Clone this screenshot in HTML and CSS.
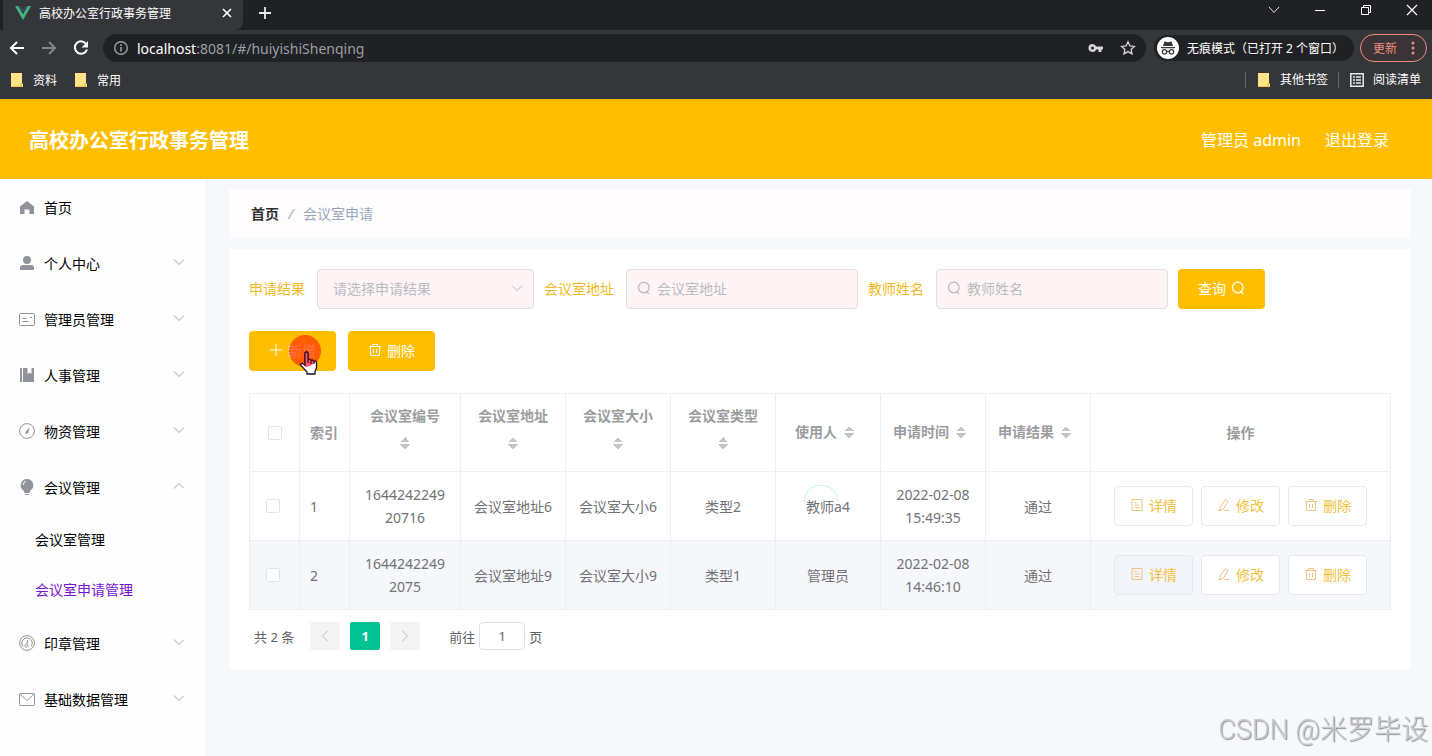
FILE: index.html
```html
<!DOCTYPE html>
<html lang="zh-CN">
<head>
  <meta charset="UTF-8" />
  <title>高校办公室行政事务管理</title>
  <link rel="stylesheet" href="styles.css">
</head>
<body>

<!-- icon set -->
<svg class="sprite" aria-hidden="true">
  <symbol id="i-down" viewBox="0 0 12 12"><path d="M1 3.5l5 5 5-5" fill="none" stroke="currentColor"/></symbol>
  <symbol id="i-search" viewBox="0 0 14 14"><circle cx="6.8" cy="6.5" r="5.3" fill="none" stroke="currentColor" stroke-width="1.200"/><path d="M9.500 10.800l2.700 2" fill="none" stroke="currentColor" stroke-width="1.200"/></symbol>
  <symbol id="i-trash" viewBox="0 0 14 14"><path d="M1 3.5h12M4.500 3.500v-2h5v2M2.500 3.500v9h9v-9M5.500 6v4M8.500 6v4" fill="none" stroke="currentColor"/></symbol>
  <symbol id="i-doc" viewBox="0 0 14 14"><path d="M2 1.500h10v11H2zM4.500 4.500h2M4.500 7h5M4.500 9.500h5" fill="none" stroke="currentColor"/></symbol>
  <symbol id="i-edit" viewBox="0 0 14 14"><path d="M8.500 1.500l2.500 2-4.500 7.500-3.500 1.500.5-4zM1 12.500h3M7.500 12.500H12" fill="none" stroke="currentColor"/></symbol>
  <symbol id="i-folder" viewBox="0 0 14 16"><path d="M1 1h11v10l1 1v3H1z" fill="#ffe487"/><path d="M1 14h9v1H1zM10 11h2v4h-2z" fill="#f5c94c"/></symbol>
</svg>

<div class="browser">
  <div class="tabs">
    <div class="tab">
      <svg width="16" height="14" viewBox="0 0 16 14"><path d="M0 0h3.300L8 8.200 12.700 0H16L8 14z" fill="#41b883"/><path d="M3.300 0H6l2 3.400L10 0h2.700L8 8.200z" fill="#35495e"/></svg>
      <span class="tab-title">高校办公室行政事务管理</span>
      <button class="bare" aria-label="关闭标签页"><svg width="10" height="10" viewBox="0 0 10 10"><path d="M1 1l8 8M9 1L1 9" stroke="#fff" stroke-width="1.600"/></svg></button>
    </div>
    <button class="bare new-tab" aria-label="新标签页"><svg width="14" height="14" viewBox="0 0 14 14"><path d="M7 1v12M1 7h12" stroke="#e8eaed" stroke-width="1.800"/></svg></button>
    <div class="win-buttons">
      <button class="bare" aria-label="搜索标签页"><svg width="12" height="12" viewBox="0 0 12 12"><path d="M1 3l5 5.500L11 3" fill="none" stroke="#e8eaed"/></svg></button>
      <button class="bare" aria-label="最小化"><svg width="12" height="12" viewBox="0 0 12 12"><path d="M1 6.500h10" stroke="#fff"/></svg></button>
      <button class="bare" aria-label="还原"><svg width="12" height="12" viewBox="0 0 12 12"><path d="M1.500 3.500h7v7h-7zM3.500 3.500v-2h7v7h-2" fill="none" stroke="#fff"/></svg></button>
      <button class="bare" aria-label="关闭"><svg width="12" height="12" viewBox="0 0 12 12"><path d="M1 1l10 10M11 1L1 11" stroke="#fff" stroke-width="1.200"/></svg></button>
    </div>
  </div>

  <div class="toolbar">
    <button class="bare" aria-label="后退"><svg width="16" height="16" viewBox="0 0 16 16"><path d="M15 8H2M8 2L2 8l6 6" fill="none" stroke="#fff" stroke-width="2"/></svg></button>
    <button class="bare" aria-label="前进"><svg width="16" height="16" viewBox="0 0 16 16"><path d="M1 8h13M8 2l6 6-6 6" fill="none" stroke="#85868a" stroke-width="2"/></svg></button>
    <button class="bare" aria-label="刷新"><svg width="16" height="16" viewBox="0 0 16 16"><path d="M13.500 4.500A6.200 6.200 0 1 0 14 9.500" fill="none" stroke="#fff" stroke-width="2"/><path d="M15 1v6.500H8.500z" fill="#fff"/></svg></button>
    <div class="address">
      <svg width="16" height="16" viewBox="0 0 16 16"><circle cx="8" cy="8" r="6.300" fill="none" stroke="#9aa0a6" stroke-width="1.400"/><path d="M8 7v4.500M8 4.200V6" stroke="#9aa0a6" stroke-width="1.600"/></svg>
      <span class="url"><b>localhost</b>:8081/#/huiyishiShenqing</span>
      <svg width="16" height="16" viewBox="0 0 16 16"><path fill="#d5d6d8" fill-rule="evenodd" d="M4.500 4a4 4 0 0 1 3.700 2.500H15v3h-1.500V12h-3V9.500H8.200A4 4 0 1 1 4.500 4zm0 2.500a1.500 1.500 0 1 0 0 3 1.500 1.500 0 0 0 0-3z"/></svg>
      <svg width="16" height="16" viewBox="0 0 16 16"><path d="M8 1.800l1.900 4.100 4.500.5-3.300 3 .9 4.500L8 11.600l-4 2.300.9-4.500-3.300-3 4.500-.5z" fill="none" stroke="#d5d6d8" stroke-width="1.300"/></svg>
    </div>
    <div class="incognito">
      <svg width="22" height="22" viewBox="0 0 22 22"><circle cx="11" cy="11" r="11" fill="#fff"/><path d="M7.500 4.500l3.500.8 3.500-.8 1.500 4.500H6zM4 10h14v1.200H4z" fill="#35363a"/><g fill="none" stroke="#35363a" stroke-width="1.200"><circle cx="7.500" cy="14.800" r="2.200"/><circle cx="14.500" cy="14.800" r="2.200"/><path d="M9.700 14.500h2.600"/></g></svg>
      <span>无痕模式（已打开 2 个窗口）</span>
    </div>
    <button class="update">更新 <svg width="4" height="14" viewBox="0 0 4 14" fill="#f28b82"><circle cx="2" cy="2" r="1.500"/><circle cx="2" cy="7" r="1.500"/><circle cx="2" cy="12" r="1.500"/></svg></button>
  </div>

  <div class="bookmarks">
    <a href="#"><svg width="14" height="16"><use href="#i-folder"/></svg>资料</a>
    <a href="#"><svg width="14" height="16"><use href="#i-folder"/></svg>常用</a>
    <a href="#" class="right"><svg width="14" height="16"><use href="#i-folder"/></svg>其他书签</a>
    <a href="#" class="reading"><svg width="14" height="14" viewBox="0 0 14 14"><path d="M.8.8h12.400v12.400H.8zM3 4h2M6 4h5M3 7h2M6 7h5M3 10h2M6 10h5" fill="none" stroke="#e8eaed" stroke-width="1.500"/></svg>阅读清单</a>
  </div>
</div>

<header class="header">
  <h1>高校办公室行政事务管理</h1>
  <span>管理员 admin</span>
  <a href="#">退出登录</a>
</header>

<div class="layout">
  <nav class="sidebar">
    <a href="#" class="item">
      <svg width="16" height="16" viewBox="0 0 16 16"><path d="M8 2l7 5.500V15h-4.500v-4.500h-5V15H1V7.500z" fill="#909399"/></svg><span>首页</span>
    </a>
    <a href="#" class="item">
      <svg width="16" height="16" viewBox="0 0 16 16" fill="#909399"><circle cx="8" cy="5" r="4"/><path d="M1 15v-2q0-3 3-3h8q3 0 3 3v2z"/></svg><span>个人中心</span>
      <svg class="arrow" width="12" height="12"><use href="#i-down"/></svg>
    </a>
    <a href="#" class="item">
      <svg width="16" height="16" viewBox="0 0 16 16" fill="none" stroke="#909399"><rect x=".5" y="2.500" width="15" height="12" rx="1"/><path d="M3.500 7.500h4M3.500 10.500h6M11 6.500h2"/></svg><span>管理员管理</span>
      <svg class="arrow" width="12" height="12"><use href="#i-down"/></svg>
    </a>
    <a href="#" class="item">
      <svg width="16" height="16" viewBox="0 0 16 16" fill="#909399"><path d="M1 1h2v14H1zM4 1h4.500v6L10.500 5.500 12.500 7V1H15v14H4z"/></svg><span>人事管理</span>
      <svg class="arrow" width="12" height="12"><use href="#i-down"/></svg>
    </a>
    <a href="#" class="item">
      <svg width="16" height="16" viewBox="0 0 16 16"><circle cx="8" cy="8" r="7.400" fill="none" stroke="#909399"/><path d="M11 4L9.300 9.500 7 11.500 6.500 9z" fill="#909399"/></svg><span>物资管理</span>
      <svg class="arrow" width="12" height="12"><use href="#i-down"/></svg>
    </a>
    <a href="#" class="item">
      <svg width="16" height="16" viewBox="0 0 16 16"><path d="M8 0a6.300 6.300 0 0 1 3.500 11.500L10.500 14h-5l-1-2.500A6.300 6.300 0 0 1 8 0zM6 15h4v1H6z" fill="#909399"/><path d="M4 6q.3-3 3-3.700" fill="none" stroke="#fff"/></svg><span>会议管理</span>
      <svg class="arrow up" width="12" height="12"><use href="#i-down"/></svg>
    </a>
    <a href="#" class="subitem">会议室管理</a>
    <a href="#" class="subitem active">会议室申请管理</a>
    <a href="#" class="item">
      <svg width="16" height="16" viewBox="0 0 16 16" fill="none" stroke="#909399"><circle cx="8" cy="8" r="7.400"/><path d="M4 11.500a5.200 5.200 0 1 1 8 0M8.500 5L8 9"/><circle cx="7.500" cy="10.800" r="1.500"/></svg><span>印章管理</span>
      <svg class="arrow" width="12" height="12"><use href="#i-down"/></svg>
    </a>
    <a href="#" class="item">
      <svg width="16" height="16" viewBox="0 0 16 16" fill="none" stroke="#909399"><rect x=".5" y="2.500" width="15" height="12" rx="1"/><path d="M1 3l7 6.500L15 3"/></svg><span>基础数据管理</span>
      <svg class="arrow" width="12" height="12"><use href="#i-down"/></svg>
    </a>
  </nav>

  <main class="main">
    <div class="breadcrumb"><a href="#">首页</a><i>/</i><span>会议室申请</span></div>

    <section class="card">
      <form class="filters">
        <label for="result">申请结果</label>
        <div class="field select">
          <select id="result"><option>请选择申请结果</option></select>
          <svg width="12" height="12"><use href="#i-down"/></svg>
        </div>
        <label for="address">会议室地址</label>
        <div class="field">
          <svg width="14" height="14"><use href="#i-search"/></svg>
          <input id="address" type="text" placeholder="会议室地址">
        </div>
        <label for="teacher">教师姓名</label>
        <div class="field">
          <svg width="14" height="14"><use href="#i-search"/></svg>
          <input id="teacher" type="text" placeholder="教师姓名">
        </div>
        <button type="button" class="btn">查询 <svg width="14" height="14"><use href="#i-search"/></svg></button>
      </form>

      <div class="actions">
        <button class="btn add"><svg width="14" height="14" viewBox="0 0 14 14"><path d="M7 1v12M1 7h12" stroke="#fff"/></svg>新增
          <svg class="pointer" width="34" height="42" viewBox="0 0 34 42">
            <circle cx="16" cy="16" r="16" fill="#ff3000" fill-opacity=".7"/>
            <path id="hand" d="M16 30V18q1.500-2 3 0v7q2-1.500 3 .5 2-1 3 1 2.500-1 2.500 1.500v5l-1.500 3.500v2.500h-8V37l-6-6.500q-1-2.500 1.500-2z" fill="#fff" stroke="#1d1426" stroke-width="1.300"/>
            <path d="M16 30V18q1.500-2 3 0v7q2-1.500 3 .5 2-1 3 1l1 .5q-4 5-10 5z" fill="#ff5a6e"/>
            <path d="M16 31V18q1.500-2 3 0v10M19 25q2-1.500 3 .5V29M22 25.500q2-1 3 1V29" fill="none" stroke="#4b1020" stroke-width="1.300"/>
          </svg>
        </button>
        <button class="btn"><svg width="14" height="14"><use href="#i-trash"/></svg>删除</button>
      </div>

      <table class="table">
        <colgroup>
          <col class="c-small"><col class="c-small"><col class="c-code">
          <col class="c-mid"><col class="c-mid"><col class="c-mid"><col class="c-mid"><col class="c-mid"><col class="c-mid">
          <col>
        </colgroup>
        <thead>
          <tr>
            <th><input type="checkbox" aria-label="全选"></th>
            <th class="left">索引</th>
            <th>会议室编号 <span class="sort"></span></th>
            <th>会议室地址 <span class="sort"></span></th>
            <th>会议室大小 <span class="sort"></span></th>
            <th>会议室类型 <span class="sort"></span></th>
            <th>使用人<span class="sort"></span></th>
            <th>申请时间<span class="sort"></span></th>
            <th>申请结果<span class="sort"></span></th>
            <th>操作</th>
          </tr>
        </thead>
        <tbody>
          <tr>
            <td class="check"><input type="checkbox" aria-label="选择第1行"></td>
            <td class="left">1</td>
            <td class="code">164424224920716</td>
            <td>会议室地址6</td>
            <td>会议室大小6</td>
            <td>类型2</td>
            <td class="loading">教师a4<svg width="36" height="36" viewBox="0 0 36 36"><path d="M1 17a17 17 0 0 1 34 0" fill="none" stroke="#c3f3e4"/></svg></td>
            <td>2022-02-08 15:49:35</td>
            <td>通过</td>
            <td>
              <div class="ops">
                <button><svg width="14" height="14"><use href="#i-doc"/></svg>详情</button>
                <button><svg width="14" height="14"><use href="#i-edit"/></svg>修改</button>
                <button><svg width="14" height="14"><use href="#i-trash"/></svg>删除</button>
              </div>
            </td>
          </tr>
          <tr class="striped">
            <td class="check"><input type="checkbox" aria-label="选择第2行"></td>
            <td class="left">2</td>
            <td class="code">16442422492075</td>
            <td>会议室地址9</td>
            <td>会议室大小9</td>
            <td>类型1</td>
            <td>管理员</td>
            <td>2022-02-08 14:46:10</td>
            <td>通过</td>
            <td>
              <div class="ops">
                <button class="hover"><svg width="14" height="14"><use href="#i-doc"/></svg>详情</button>
                <button><svg width="14" height="14"><use href="#i-edit"/></svg>修改</button>
                <button><svg width="14" height="14"><use href="#i-trash"/></svg>删除</button>
              </div>
            </td>
          </tr>
        </tbody>
      </table>

      <div class="pagination">
        <span>共 2 条</span>
        <button aria-label="上一页"><svg class="prev" width="12" height="12"><use href="#i-down"/></svg></button>
        <button class="current">1</button>
        <button aria-label="下一页"><svg class="next" width="12" height="12"><use href="#i-down"/></svg></button>
        <label class="jump">前往 <input type="text" value="1"> 页</label>
      </div>
    </section>
  </main>
</div>

<div class="watermark">CSDN @米罗毕设</div>

</body>
</html>
```
FILE: styles.css
```css
* {
  box-sizing: border-box;
}
body {
  margin: 0;
  min-height: 100vh;
  display: flex;
  flex-direction: column;
  font-family: "Noto Sans", "Noto Sans CJK SC", sans-serif;
  font-size: 14px;
  color: #606266;
  background: #f6f8fb;
}
a {
  color: inherit;
  text-decoration: none;
}
button, input, select {
  font: inherit;
  color: inherit;
}
svg {
  flex: none;
}
.sprite {
  position: absolute;
  width: 0;
  height: 0;
}

/* browser window */
.browser {
  background: #35363a;
  color: #fff;
  font-size: 12px;
  border-bottom: 1px solid #33344a;
}
.bare {
  display: flex;
  padding: 0;
  border: 0;
  background: none;
}
.tabs {
  display: flex;
  align-items: center;
  height: 30px;
  padding: 0 14px 0 3px;
  background: #202124;
}
.tab {
  display: flex;
  align-items: center;
  width: 240px;
  height: 30px;
  margin-right: 15px;
  padding: 0 11px 4px 12px;
  background: #35363a;
  border-radius: 0 0 8px 0;
}
.tab-title {
  flex: 1;
  margin-left: 8px;
}
.new-tab {
  padding-bottom: 4px;
}
.win-buttons {
  display: flex;
  gap: 34px;
  margin-left: auto;
  padding-bottom: 10px;
}
.toolbar {
  display: flex;
  align-items: center;
  height: 36px;
  padding: 0 5px 0 9px;
}
.toolbar > .bare {
  margin-right: 16px;
}
.toolbar > .bare:nth-child(3) {
  margin-right: 14px;
}
.address {
  flex: 1;
  display: flex;
  align-items: center;
  gap: 16px;
  height: 28px;
  margin-right: 8px;
  padding: 0 10px;
  border-radius: 14px;
  background: #202124;
}
.url {
  flex: 1;
  margin-left: -8px;
  font-size: 14px;
  color: #9aa0a6;
}
.url b {
  font-weight: 400;
  color: #fff;
}
.incognito {
  display: flex;
  align-items: center;
  gap: 8px;
  height: 26px;
  margin-right: 6px;
  padding: 0 10px 0 3px;
  border-radius: 13px;
  background: #202124;
}
.update {
  display: flex;
  align-items: center;
  gap: 14px;
  height: 28px;
  padding: 0 11px 0 12px;
  border: 1px solid #f28b82;
  border-radius: 14px;
  background: #3a3337;
  color: #f28b82;
}
.bookmarks {
  display: flex;
  align-items: center;
  gap: 17px;
  height: 32px;
  padding: 0 11px 4px 10px;
}
.bookmarks a {
  display: flex;
  align-items: center;
  gap: 9px;
}
.bookmarks .right {
  margin-left: auto;
}
.bookmarks .right,
.bookmarks .reading {
  padding-left: 11px;
  border-left: 1px solid #6b6c70;
  line-height: 16px;
}
.bookmarks .reading {
  margin-left: -7px;
}

/* app header */
.header {
  display: flex;
  align-items: center;
  gap: 24px;
  height: 80px;
  padding: 0 43px 0 29px;
  background: #ffbe00;
  color: #fff;
  font-size: 16px;
}
.header h1 {
  flex: 1;
  margin: 0;
  font-size: 20px;
}

.layout {
  flex: 1;
  display: flex;
}
.sidebar {
  width: 206px;
  background: #fefefe;
  color: #000;
}
.item {
  display: flex;
  align-items: center;
  gap: 9px;
  height: 56px;
  padding: 0 21px 0 19px;
}
.arrow {
  margin: 0 0 2px auto;
  color: #a3a6ab;
}
.arrow.up {
  transform: rotate(180deg);
}
.subitem {
  display: flex;
  align-items: center;
  height: 50px;
  padding: 0 0 2px 35px;
}
.subitem.active {
  color: #7a12d4;
}

.main {
  flex: 1;
  padding: 10px 21px 20px 23px;
}
.breadcrumb {
  display: flex;
  align-items: center;
  gap: 9px;
  height: 50px;
  margin-bottom: 10px;
  padding: 0 22px 2px;
  background: #fefcfd;
  color: #97a8be;
}
.breadcrumb a {
  font-weight: 700;
  color: #303133;
}
.breadcrumb i {
  font-weight: 700;
  color: #c0c4cc;
}
.card {
  padding: 20px;
  background: #fff;
}

/* search form */
.filters {
  display: flex;
  align-items: center;
  gap: 10px;
  margin-bottom: 22px;
}
.filters label {
  margin-right: 2px;
  padding-bottom: 2px;
  color: #f2b824;
}
.field {
  display: flex;
  align-items: center;
  gap: 6px;
  width: 232px;
  height: 40px;
  padding: 0 10px 2px;
  border: 1px solid #dcdfe6;
  border-radius: 4px;
  background: #fff4f5;
  color: #b8bbc2;
}
.field.select {
  width: 217px;
  padding-left: 15px;
}
.field input,
.field select {
  flex: 1;
  min-width: 0;
  padding: 0;
  border: 0;
  outline: 0;
  background: none;
  appearance: none;
}
.field ::placeholder {
  color: #b8bbc2;
}
.btn {
  display: flex;
  align-items: center;
  justify-content: center;
  gap: 5px;
  width: 87px;
  height: 40px;
  padding: 0 0 2px;
  border: 0;
  border-radius: 4px;
  background: #ffbe00;
  color: #fff;
}
.actions {
  display: flex;
  gap: 12px;
  margin-bottom: 22px;
}
.add {
  position: relative;
}
.pointer {
  position: absolute;
  left: 40px;
  top: 4px;
}

/* table */
.table {
  width: 100%;
  table-layout: fixed;
  border-collapse: collapse;
  line-height: 23px;
  color: #717275;
}
.c-small {
  width: 50px;
}
.c-code {
  width: 111px;
}
.c-mid {
  width: 105px;
}
.table th,
.table td {
  padding: 0 10px;
  border: 1px solid #eeeff3;
  text-align: center;
  word-break: break-word;
}
.table th {
  height: 78px;
  color: #9b9c9f;
}
.table td {
  height: 69px;
}
.table .left {
  text-align: left;
}
.table .code {
  padding: 0 12px;
}
.table .check {
  padding-right: 14px;
}
.table input {
  display: block;
  width: 14px;
  height: 14px;
  margin: 0 auto;
  border: 1px solid #e2e4e9;
  border-radius: 2px;
  background: #fff;
  appearance: none;
}
.striped {
  background: #f6f7fb;
}
.sort {
  display: inline-block;
  width: 24px;
  height: 34px;
  vertical-align: middle;
  background:
    conic-gradient(from 135deg at 50% 0, #c4c5c9 90deg, transparent 0) center 10px / 10px 5px no-repeat,
    conic-gradient(from -45deg at 50% 100%, #c4c5c9 90deg, transparent 0) center 17px / 10px 5px no-repeat;
}
.loading {
  position: relative;
}
.loading svg {
  position: absolute;
  left: 27px;
  top: 13px;
}
.ops {
  display: flex;
  justify-content: center;
  gap: 8px;
}
.ops button {
  display: flex;
  align-items: center;
  justify-content: center;
  gap: 5px;
  width: 79px;
  height: 40px;
  padding: 0 0 2px;
  border: 1px solid #e6e8ed;
  border-radius: 4px;
  background: #fff;
  color: #f2c13c;
}
.ops svg {
  color: #f3c285;
}
.ops .hover {
  background: #f3f4f9;
}

.pagination {
  display: flex;
  align-items: center;
  gap: 10px;
  margin-top: 12px;
  padding-left: 5px;
  font-size: 13px;
}
.pagination span {
  margin-right: 6px;
}
.pagination button {
  display: flex;
  align-items: center;
  justify-content: center;
  width: 30px;
  height: 28px;
  padding: 0;
  border: 0;
  border-radius: 2px;
  background: #f4f4f5;
  color: #b4b8c0;
}
.pagination .current {
  background: #00c292;
  color: #fff;
  font-weight: 700;
}
.prev {
  transform: rotate(90deg);
}
.next {
  transform: rotate(-90deg);
}
.jump {
  display: flex;
  align-items: center;
  gap: 4px;
  margin-left: 19px;
}
.jump input {
  width: 46px;
  height: 28px;
  padding: 0;
  border: 1px solid #dcdfe6;
  border-radius: 4px;
  text-align: center;
}

.watermark {
  position: fixed;
  right: 4px;
  bottom: 6px;
  font-family: Roboto, "Noto Sans CJK SC", sans-serif;
  font-size: 27px;
  font-weight: 300;
  line-height: 40px;
  color: #c9cacd;
  text-shadow: 1px 1px 1px #8e8f93;
}
```
